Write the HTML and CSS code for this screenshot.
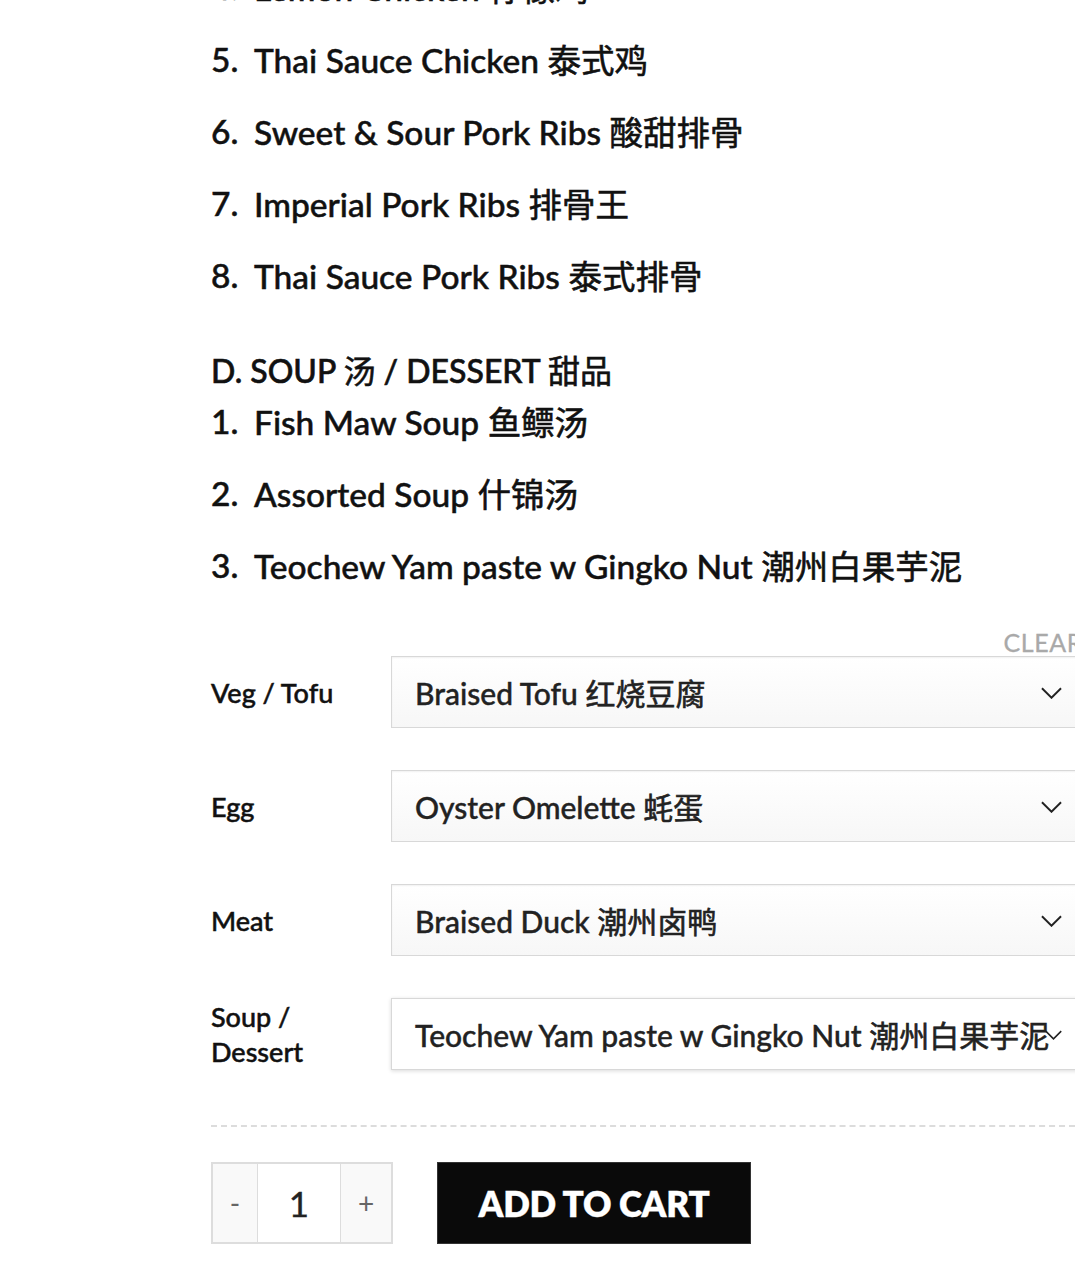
FILE: index.html
```html
<!DOCTYPE html>
<html lang="en">
<head>
<meta charset="utf-8">
<title>Teochew Set</title>
<link rel="stylesheet" href="styles.css">
</head>
<body>
<div class="page">
  <ol class="menu menu-first">
    <li><span class="num">4.</span><span>Lemon Chicken <span class="zh">柠檬鸡</span></span></li>
    <li><span class="num">5.</span><span>Thai Sauce Chicken <span class="zh">泰式鸡</span></span></li>
    <li><span class="num">6.</span><span>Sweet &amp; Sour Pork Ribs <span class="zh">酸甜排骨</span></span></li>
    <li><span class="num">7.</span><span>Imperial Pork Ribs <span class="zh">排骨王</span></span></li>
    <li><span class="num">8.</span><span>Thai Sauce Pork Ribs <span class="zh">泰式排骨</span></span></li>
  </ol>
  <h3 class="section-title">D. SOUP <span class="zh">汤</span> / DESSERT <span class="zh">甜品</span></h3>
  <ol class="menu">
    <li><span class="num">1.</span><span>Fish Maw Soup <span class="zh">鱼鳔汤</span></span></li>
    <li><span class="num">2.</span><span>Assorted Soup <span class="zh">什锦汤</span></span></li>
    <li><span class="num">3.</span><span>Teochew Yam paste w Gingko Nut <span class="zh">潮州白果芋泥</span></span></li>
  </ol>

  <form class="variations">
    <div class="clear-row"><a class="clear" href="#">CLEAR</a></div>
    <div class="var-row">
      <label class="var-label">Veg / Tofu</label>
      <div class="select"><span class="select-text">Braised Tofu <span class="zh">红烧豆腐</span></span><svg class="chev" viewBox="0 0 22 12"><path d="M1 1 L11 11 L21 1" /></svg></div>
    </div>
    <div class="var-row">
      <label class="var-label">Egg</label>
      <div class="select"><span class="select-text">Oyster Omelette <span class="zh">蚝蛋</span></span><svg class="chev" viewBox="0 0 22 12"><path d="M1 1 L11 11 L21 1" /></svg></div>
    </div>
    <div class="var-row">
      <label class="var-label">Meat</label>
      <div class="select"><span class="select-text">Braised Duck <span class="zh">潮州卤鸭</span></span><svg class="chev" viewBox="0 0 22 12"><path d="M1 1 L11 11 L21 1" /></svg></div>
    </div>
    <div class="var-row">
      <label class="var-label">Soup /<br>Dessert</label>
      <div class="select select-focus"><span class="select-text">Teochew Yam paste w Gingko Nut <span class="zh">潮州白果芋泥</span></span><svg class="chev chev-small" viewBox="0 0 22 12"><path d="M1 1 L11 11 L21 1" /></svg></div>
    </div>
  </form>

  <div class="divider"></div>

  <div class="cart-row">
    <div class="qty">
      <button class="qty-btn minus" type="button">-</button>
      <div class="qty-input">1</div>
      <button class="qty-btn plus" type="button">+</button>
    </div>
    <button class="add-cart" type="button">ADD TO CART</button>
  </div>
</div>
</body>
</html>
```

FILE: styles.css
```css
html, body {
  margin: 0;
  padding: 0;
  overflow: hidden;
  background: #fff;
}
body {
  font-family: Lato, "Noto Sans CJK SC", sans-serif;
  color: #111;
}
.page {
  padding-left: 211px;
  width: 874px;
}
.zh {
  font-family: "Noto Sans CJK SC", sans-serif;
  font-weight: 400;
  -webkit-text-stroke: 0.6px currentColor;
}
.menu {
  list-style: none;
  margin: 0;
  padding: 0;
}
.menu-first {
  margin-top: -35px;
}
.menu li {
  display: flex;
  font-size: 33.5px;
  font-weight: 500;
  -webkit-text-stroke: 0.5px #111;
  line-height: 44px;
  height: 44px;
  margin-bottom: 28px;
  white-space: nowrap;
}
.num {
  width: 43px;
  flex: none;
}
.section-title {
  margin: 50px 0 8px;
  font-size: 32px;
  font-weight: 500;
  -webkit-text-stroke: 0.6px #111;
  line-height: 44px;
  height: 44px;
  white-space: nowrap;
}
.variations {
  margin: 0;
}
.clear-row {
  height: 41px;
  display: flex;
  justify-content: flex-end;
  align-items: flex-end;
}
.clear {
  color: #a9a9a9;
  font-size: 25px;
  line-height: 24px;
  padding-bottom: 2px;
  margin-right: 2px;
  text-decoration: none;
  letter-spacing: 0.6px;
  -webkit-text-stroke: 0.3px #a9a9a9;
}
.var-row {
  display: flex;
  align-items: center;
  margin-bottom: 42px;
}
.var-row:last-child {
  margin-bottom: 0;
}
.var-label {
  width: 180px;
  flex: none;
  font-size: 27px;
  font-weight: 500;
  -webkit-text-stroke: 0.5px #111;
  line-height: 35px;
}
.select {
  flex: 1;
  height: 72px;
  box-sizing: border-box;
  border: 1px solid #d8d8d8;
  background: linear-gradient(#fff, #f7f7f7);
  box-shadow: inset 0 1px 2px rgba(0,0,0,0.06);
  display: flex;
  align-items: center;
  padding-left: 23px;
  position: relative;
  white-space: nowrap;
  overflow: hidden;
}
.select-focus {
  background: #fff;
  box-shadow: 0 1px 4px rgba(0,0,0,0.15);
}
.select-text {
  font-size: 30px;
  font-weight: 500;
  color: #222;
  -webkit-text-stroke: 0.4px #222;
}
.chev {
  position: absolute;
  right: 22px;
  top: 30px;
  width: 21px;
  height: 12px;
  fill: none;
  stroke: #222;
  stroke-width: 2;
}
.chev-small {
  right: 22px;
  width: 17px;
  height: 10px;
  top: 31px;
}
.divider {
  margin-top: 55px;
  border-top: 2px dashed #dcdcdc;
}
.cart-row {
  margin-top: 35px;
  display: flex;
  gap: 44px;
}
.qty {
  display: flex;
  height: 82px;
}
.qty-btn {
  box-sizing: border-box;
  height: 82px;
  border: 2px solid #ddd;
  background: #f9f9f9;
  color: #666;
  font-family: Lato, sans-serif;
  font-size: 28px;
  padding: 0;
}
.minus {
  width: 47px;
  border-right: 1px solid #ddd;
}
.plus {
  width: 53px;
  border-left: 1px solid #ddd;
}
.qty-input {
  box-sizing: border-box;
  width: 82px;
  height: 82px;
  border-top: 2px solid #ddd;
  border-bottom: 2px solid #ddd;
  display: flex;
  align-items: center;
  justify-content: center;
  font-size: 35px;
  color: #222;
  -webkit-text-stroke: 0.4px #222;
}
.add-cart {
  width: 314px;
  height: 82px;
  background: #0a0a0a;
  color: #fff;
  border: 1px solid #333;
  font-family: Lato, sans-serif;
  font-weight: 800;
  font-size: 35px;
  letter-spacing: -0.3px;
  -webkit-text-stroke: 0.3px #fff;
  padding: 0;
}
```
